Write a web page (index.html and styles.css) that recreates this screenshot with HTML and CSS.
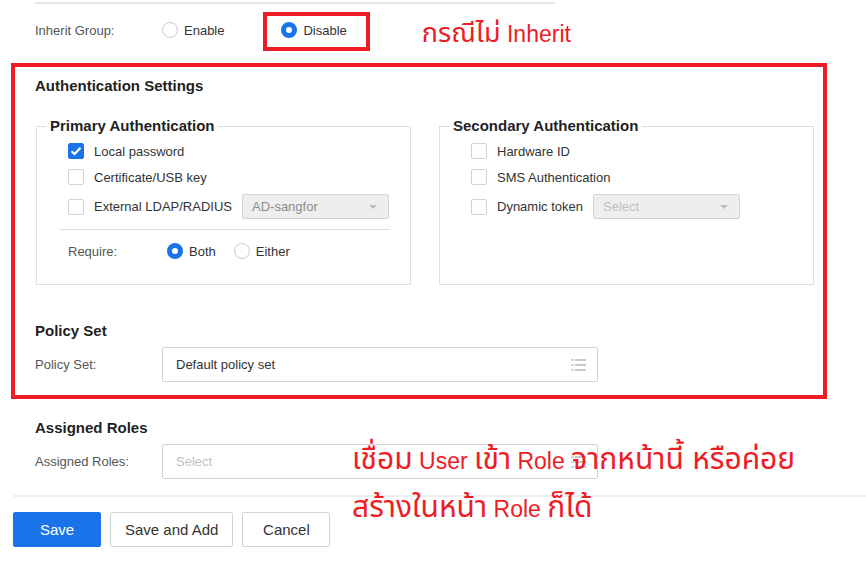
FILE: index.html
```html
<html>
    <head>
        <meta charset="utf-8">
        <link rel="stylesheet" href="styles.css">
    </head>
    <body>
        <div class="page">
            <div class="form">
                <div class="prev-divider"></div>

                <div class="field-row inherit-row">
                    <span class="field-label">Inherit Group:</span>
                    <span class="radio-option">
                        <span class="radio"></span>
                        <span>Enable</span>
                    </span>
                    <span class="radio-option marked">
                        <span class="radio checked"></span>
                        <span>Disable</span>
                    </span>
                    <span class="note note-top"><span class="th">กรณีไม่</span> Inherit</span>
                </div>

                <div class="mark-box">
                    <h3 class="section-title">Authentication Settings</h3>
                    <div class="auth-columns">
                        <fieldset class="auth-group">
                            <legend>Primary Authentication</legend>
                            <div class="check-row first">
                                <span class="checkbox checked">
                                    <svg width="12" height="10" viewBox="0 0 12 10"><path d="M1.5 5.2 L4.6 8 L10.5 1.8" fill="none" stroke="#fff" stroke-width="2.2"/></svg>
                                </span>
                                <span>Local password</span>
                            </div>
                            <div class="check-row">
                                <span class="checkbox"></span>
                                <span>Certificate/USB key</span>
                            </div>
                            <div class="check-row with-select">
                                <span class="checkbox"></span>
                                <span>External LDAP/RADIUS</span>
                                <span class="select disabled">
                                    <span>AD-sangfor</span>
                                    <span class="caret"></span>
                                </span>
                            </div>
                            <div class="group-divider"></div>
                            <div class="require-row">
                                <span class="require-label">Require:</span>
                                <span class="radio-option">
                                    <span class="radio checked"></span>
                                    <span>Both</span>
                                </span>
                                <span class="radio-option">
                                    <span class="radio"></span>
                                    <span>Either</span>
                                </span>
                            </div>
                        </fieldset>

                        <fieldset class="auth-group">
                            <legend>Secondary Authentication</legend>
                            <div class="check-row first">
                                <span class="checkbox"></span>
                                <span>Hardware ID</span>
                            </div>
                            <div class="check-row">
                                <span class="checkbox"></span>
                                <span>SMS Authentication</span>
                            </div>
                            <div class="check-row with-select">
                                <span class="checkbox"></span>
                                <span>Dynamic token</span>
                                <span class="select disabled">
                                    <span class="placeholder">Select</span>
                                    <span class="caret"></span>
                                </span>
                            </div>
                        </fieldset>
                    </div>

                    <h3 class="section-title policy-title">Policy Set</h3>
                    <div class="field-row">
                        <span class="field-label">Policy Set:</span>
                        <span class="input">
                            <span>Default policy set</span>
                            <svg class="list-icon" width="15" height="12" viewBox="0 0 15 12">
                                <rect x="0" y="0" width="3" height="2" fill="#d6d6d6"/><rect x="4" y="0" width="11" height="2" fill="#c9c9c9"/>
                                <rect x="0" y="5" width="3" height="2" fill="#d6d6d6"/><rect x="4" y="5" width="11" height="2" fill="#c9c9c9"/>
                                <rect x="0" y="10" width="3" height="2" fill="#d6d6d6"/><rect x="4" y="10" width="11" height="2" fill="#c9c9c9"/>
                            </svg>
                        </span>
                    </div>
                </div>

                <h3 class="section-title roles-title">Assigned Roles</h3>
                <div class="field-row">
                    <span class="field-label">Assigned Roles:</span>
                    <span class="input">
                        <span class="placeholder">Select</span>
                        <svg class="list-icon" width="15" height="12" viewBox="0 0 15 12">
                            <rect x="0" y="0" width="3" height="2" fill="#d6d6d6"/><rect x="4" y="0" width="11" height="2" fill="#c9c9c9"/>
                            <rect x="0" y="5" width="3" height="2" fill="#d6d6d6"/><rect x="4" y="5" width="11" height="2" fill="#c9c9c9"/>
                            <rect x="0" y="10" width="3" height="2" fill="#d6d6d6"/><rect x="4" y="10" width="11" height="2" fill="#c9c9c9"/>
                        </svg>
                    </span>
                </div>
            </div>

            <div class="footer">
                <button class="btn primary">Save</button>
                <button class="btn">Save and Add</button>
                <button class="btn">Cancel</button>
            </div>

            <div class="note note-bottom"><span class="th">เชื่อม</span> User <span class="th">เข้า</span> Role <span class="th">จากหน้านี้ หรือค่อย</span><br><span class="th">สร้างในหน้า</span> Role <span class="th">ก็ได้</span></div>
        </div>
    </body>
</html>
```

FILE: styles.css
```css
body {
    margin: 0;
    font-family: "Liberation Sans", Arial, sans-serif;
    font-size: 13px;
    color: #333;
    background: #fff;
}

.page {
    position: relative;
    height: 563px;
    overflow: hidden;
}

.form {
    padding-left: 35px;
}

.prev-divider {
    width: 520px;
    height: 2px;
    margin-top: 2px;
    background: #e4e4e4;
}

.field-row {
    display: flex;
    align-items: center;
}

.field-label {
    width: 127px;
    color: #555;
}

.inherit-row {
    margin-top: 16px;
    height: 20px;
}

.radio-option {
    display: flex;
    align-items: center;
    gap: 6px;
    margin-right: 57px;
}

.radio {
    width: 16px;
    height: 16px;
    box-sizing: border-box;
    border: 1px solid #c8cbd0;
    border-radius: 50%;
    background: #fff;
}

.radio.checked {
    border: 5px solid #1a73e8;
}

.marked {
    position: relative;
    margin-right: 0;
}

.marked::after {
    content: "";
    position: absolute;
    left: -18px;
    top: -10px;
    width: 107px;
    height: 39px;
    box-sizing: border-box;
    border: 4px solid #ee1c25;
}

.note {
    color: #ee1c25;
    font-family: "Liberation Sans", "Noto Sans Thai", "Noto Sans", Tahoma, sans-serif;
    font-size: 23px;
    white-space: nowrap;
}

.note .th {
    font-size: 27px;
}

.note-top {
    margin-left: 75px;
    margin-top: 6px;
}

.mark-box {
    width: 816px;
    box-sizing: border-box;
    margin: 23px 0 0 -24px;
    padding: 9px 9px 13px 20px;
    border: 4px solid #ee1c25;
}

.section-title {
    margin: 0;
    font-size: 15px;
    line-height: 20px;
    font-weight: bold;
    color: #1f1f1f;
}

.auth-columns {
    display: flex;
    gap: 28px;
    margin-top: 20px;
    margin-left: 1px;
}

.auth-group {
    width: 375px;
    box-sizing: border-box;
    margin: 0;
    padding: 0 20px 25px 31px;
    border: 1px solid #dcdfe6;
}

.auth-group legend {
    margin-left: -22px;
    padding: 0 4px;
    font-size: 15px;
    line-height: 20px;
    font-weight: bold;
    color: #1f1f1f;
}

.check-row {
    display: flex;
    align-items: center;
    gap: 10px;
    min-height: 16px;
    margin-top: 10px;
}

.check-row.first {
    margin-top: 7px;
}

.check-row.with-select {
    margin-top: 9px;
}

.checkbox {
    width: 16px;
    height: 16px;
    box-sizing: border-box;
    border: 1px solid #d0d3d9;
    border-radius: 2px;
    background: #fff;
    display: flex;
    align-items: center;
    justify-content: center;
}

.checkbox.checked {
    background: #1a73e8;
    border-color: #1a73e8;
}

.select {
    display: flex;
    align-items: center;
    justify-content: space-between;
    width: 147px;
    height: 25px;
    box-sizing: border-box;
    padding: 0 11px 0 9px;
    border: 1px solid #d3d3d3;
    border-radius: 2px;
}

.select.disabled {
    background: #eeeeee;
    color: #8c8c8c;
}

.caret {
    width: 0;
    height: 0;
    border-left: 4px solid transparent;
    border-right: 4px solid transparent;
    border-top: 4px solid #bdbdbd;
}

.placeholder {
    color: #bfbfbf;
}

.group-divider {
    height: 1px;
    margin: 10px 0 0 -9px;
    background: #dcdfe6;
}

.require-row {
    display: flex;
    align-items: center;
    margin-top: 13px;
}

.require-label {
    width: 99px;
    color: #555;
}

.require-row .radio-option {
    margin-right: 18px;
}

.policy-title {
    margin-top: 36px;
    margin-bottom: 6px;
}

.input {
    display: flex;
    align-items: center;
    justify-content: space-between;
    width: 436px;
    height: 35px;
    box-sizing: border-box;
    padding: 0 11px 0 13px;
    border: 1px solid #d0d3da;
    border-radius: 2px;
    background: #fff;
}

.roles-title {
    margin-top: 19px;
    margin-bottom: 6px;
}

.footer {
    margin: 16px 0 0 13px;
    padding-top: 15px;
    border-top: 2px solid #eceef4;
    display: flex;
    gap: 9px;
}

.btn {
    min-width: 88px;
    height: 35px;
    padding: 0 14px;
    font-family: "Liberation Sans", Arial, sans-serif;
    font-size: 15px;
    color: #333;
    background: #fff;
    border: 1px solid #d0d3da;
    border-radius: 2px;
    cursor: pointer;
}

.btn.primary {
    background: #1a73e8;
    border-color: #1a73e8;
    color: #fff;
}

.note-bottom {
    position: absolute;
    left: 352px;
    top: 436px;
    line-height: 45px;
}

.note-bottom .th {
    font-size: 30px;
}
```
